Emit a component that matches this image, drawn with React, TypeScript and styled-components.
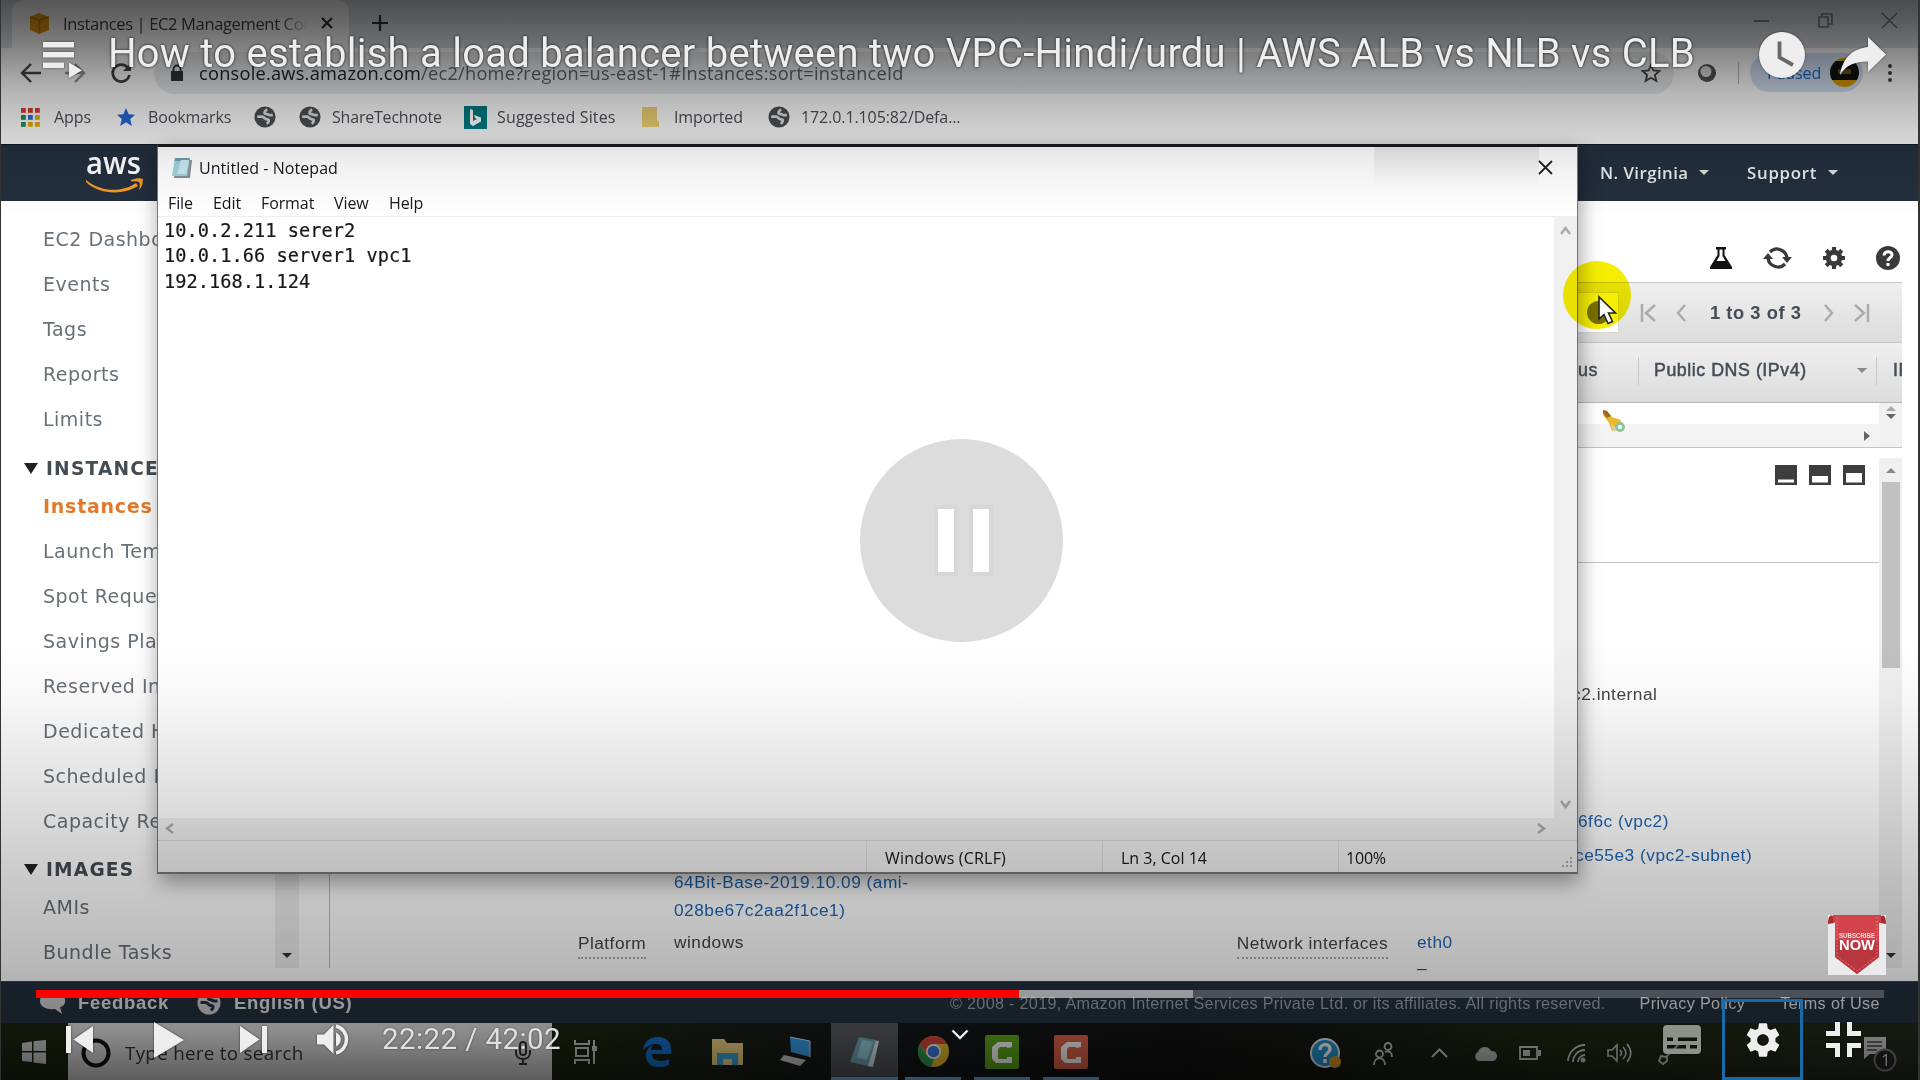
import React from "react";
import styled, { createGlobalStyle } from "styled-components";

const GlobalStyle = createGlobalStyle`
  * { box-sizing: border-box; }
  body { margin: 0; background: #000; }
`;

const uiFont = `"Open Sans", "Noto Sans", sans-serif`;
const arial = `"Liberation Sans", Arial, sans-serif`;
const verdana = `"DejaVu Sans", Verdana, sans-serif`;

/* ---------- shared ---------- */
const Screen = styled.div`
  position: relative;
  width: 1920px;
  height: 1080px;
  overflow: hidden;
  white-space: nowrap;
`;
const Desktop = styled.div`
  display: flex;
  flex-direction: column;
  width: 1920px;
  height: 1080px;
  background: #fff;
`;
const Icon = styled.svg<{ $w: number; $h?: number; $ml?: number }>`
  display: block;
  flex: none;
  width: ${(p) => p.$w}px;
  height: ${(p) => p.$h ?? p.$w}px;
  margin-left: ${(p) => p.$ml ?? 0}px;
  overflow: visible;
`;

/* ---------- browser ---------- */
const Browser = styled.header`
  flex: 0 0 144px;
  display: flex;
  flex-direction: column;
  font-family: ${uiFont};
  background: #fff;
`;
const TabStrip = styled.div`
  display: flex;
  flex: 0 0 48px;
  background: #dee1e6;
  padding-left: 12px;
`;
const Tab = styled.div`
  display: flex;
  align-items: center;
  width: 337px;
  height: 48px;
  padding: 0 16px 2px 17px;
  background: #fff;
  border-radius: 12px 12px 0 0;
`;
const TabTitle = styled.span`
  width: 246px;
  margin-left: 13px;
  overflow: hidden;
  font-size: 16.5px;
  letter-spacing: -0.35px;
  color: #3c4043;
  mask-image: linear-gradient(90deg, #000 88%, transparent);
`;
const WindowButtons = styled.div`
  display: flex;
  align-items: center;
  gap: 49px;
  height: 40px;
  margin-left: auto;
  padding-right: 23px;
`;
const AddressRow = styled.div`
  display: flex;
  align-items: center;
  flex: 0 0 48px;
  padding: 1px 0 0 21px;
`;
const Omnibox = styled.div`
  display: flex;
  align-items: center;
  width: 1520px;
  height: 42px;
  margin-left: 23px;
  padding: 0 13px 0 17px;
  border-radius: 21px;
  background: #e9ebee;
`;
const Url = styled.span`
  flex: 1;
  margin-left: 16px;
  font-size: 18.2px;
  letter-spacing: 0.25px;
  color: #5f6368;
  b { font-weight: 400; color: #202124; }
`;
const VLine = styled.i<{ $h: number; $ml: number; $c?: string }>`
  flex: none;
  width: 1px;
  height: ${(p) => p.$h}px;
  margin-left: ${(p) => p.$ml}px;
  background: ${(p) => p.$c ?? "#bbb"};
`;
const Profile = styled.div`
  display: flex;
  align-items: center;
  justify-content: space-between;
  width: 113px;
  height: 39px;
  margin-left: 11px;
  padding: 0 4px 0 17px;
  border-radius: 20px;
  background: #d3e0f5;
  color: #1967d2;
  font-size: 16px;
  letter-spacing: -0.1px;
`;
const Avatar = styled.span`
  display: grid;
  place-items: center;
  width: 29px;
  height: 29px;
  border-radius: 50%;
  background: linear-gradient(#d9a000 12%, #111 12% 76%, #d9a000 76%);
`;
const AvatarMark = styled.i`
  width: 13px;
  height: 5px;
  margin-bottom: 3px;
  border-radius: 1px;
  background: #6b5220;
`;
const Bookmarks = styled.div`
  display: flex;
  align-items: center;
  flex: 1;
  padding: 0 0 6px 21px;
  background: linear-gradient(#fdfdfd, #efeff1);
`;
const Bookmark = styled.span<{ $w: number; $gap: number; $ls?: number }>`
  display: flex;
  align-items: center;
  flex: 0 0 ${(p) => p.$w}px;
  gap: ${(p) => p.$gap}px;
  font-size: 16px;
  letter-spacing: ${(p) => p.$ls ?? -0.1}px;
  color: #4a4d52;
`;

/* ---------- aws console ---------- */
const AwsNav = styled.nav`
  display: flex;
  align-items: center;
  flex: 0 0 57px;
  padding-left: 86px;
  background: #232f3e;
  border-top: 1px solid #111823;
  color: #e8e8e8;
  font: 600 16.8px ${uiFont};
`;
const NavItem = styled.span<{ $w: number; $ls: number }>`
  display: flex;
  align-items: center;
  gap: 11px;
  width: ${(p) => p.$w}px;
  padding-bottom: 1px;
  letter-spacing: ${(p) => p.$ls}px;
`;
const NavRight = styled.div`
  display: flex;
  margin-left: auto;
`;
const Caret = styled.i<{ $c?: string; $s?: number }>`
  border: ${(p) => p.$s ?? 5}px solid transparent;
  border-top-color: ${(p) => p.$c ?? "#ddd"};
  border-bottom: 0;
`;
const Console = styled.main`
  display: flex;
  flex: 0 0 780px;
  background: #fff;
`;
const Sidebar = styled.aside`
  flex: 0 0 275px;
  overflow: hidden;
  padding: 16px 0 0 30px;
  font-family: ${verdana};
`;
const SideItem = styled.div<{ $active?: boolean }>`
  height: 45px;
  padding-left: 13px;
  line-height: 45px;
  font-size: ${(p) => (p.$active ? 19 : 19)}px;
  font-weight: ${(p) => (p.$active ? 700 : 400)};
  letter-spacing: ${(p) => (p.$active ? 0.75 : 0.5)}px;
  color: ${(p) => (p.$active ? "#e07b2e" : "#687078")};
`;
const SideHeading = styled.div`
  display: flex;
  align-items: center;
  gap: 8px;
  height: 38px;
  margin: 7px 0 -3.5px -6px;
  font-size: 18.6px;
  font-weight: 700;
  letter-spacing: 1.2px;
  color: #444c55;
`;
const SideScroll = styled.div`
  display: flex;
  align-items: flex-end;
  justify-content: center;
  width: 24px;
  height: 767px;
  padding-bottom: 10px;
  background: #eee;
`;
const Main = styled.section`
  display: flex;
  flex-direction: column;
  flex: 1;
  height: 767px;
  margin-left: 30px;
  border-left: 1px solid #bbb;
  padding-right: 18px;
  font-family: ${arial};
`;
const IconRow = styled.div`
  display: flex;
  flex: none;
  align-items: center;
  justify-content: flex-end;
  gap: 31px;
  height: 81px;
  padding: 33px 2px 0 0;
`;
const GreyRow = styled.div`
  display: flex;
  flex: none;
  align-items: center;
  justify-content: flex-end;
  height: 60px;
  border-top: 1px solid #c6c6c6;
  background: linear-gradient(#efefef, #dcdcdc);
  color: #444c58;
  font-size: 18px;
  font-weight: 700;
`;
const InfoBox = styled.div`
  display: grid;
  place-items: center;
  width: 42px;
  height: 41px;
  margin-right: 22px;
  background: #fff;
  border: 1px solid #d8d8d8;
`;
const Pager = styled.div`
  display: flex;
  align-items: center;
  width: 228px;
  margin-right: 33px;
  font-size: 18.3px;
  letter-spacing: 0.55px;
`;
const PageCount = styled.span`
  width: 115px;
  margin-left: 24px;
`;
const HeadCell = styled.div<{ $w: number; $pl: number }>`
  display: flex;
  align-items: center;
  justify-content: space-between;
  width: ${(p) => p.$w}px;
  height: 28px;
  margin-bottom: 4px;
  padding: 0 9px 0 ${(p) => p.$pl}px;
  border-left: 1px solid #c8c8c8;
  overflow: hidden;
  font-size: 17.8px;
  font-weight: 400;
  letter-spacing: 0.55px;
  -webkit-text-stroke: 0.5px #444c58;
`;
const ListRow = styled.div`
  display: flex;
  flex: none;
  justify-content: flex-end;
  height: 46px;
  border-top: 1px solid #b5b5b5;
  border-bottom: 1px solid #c4c4c4;
  background: linear-gradient(#fff 47%, #f3f3f3 47%);
`;
const RowBell = styled(Icon)`
  margin: 7px 238px 0 0;
`;
const RowArrow = styled(Icon)`
  margin: 28px 9px 0 0;
`;
const Stepper = styled.div`
  display: flex;
  flex-direction: column;
  align-items: center;
  gap: 3px;
  width: 23px;
  padding-top: 3px;
  background: #f1f1f1;
`;
const Detail = styled.div`
  display: flex;
  flex: 1;
  min-height: 0;
`;
const DetailBody = styled.div`
  flex: 1;
  display: flex;
  flex-direction: column;
  min-height: 0;
`;
const PaneButtons = styled.div`
  display: flex;
  flex: none;
  justify-content: flex-end;
  gap: 12px;
  height: 115px;
  padding: 17px 14px 0 0;
  border-bottom: 1px solid #c4c4c4;
`;
const Fields = styled.div`
  display: grid;
  grid-template-columns: 248px 68px 28px 380px 183px 151px 29px 1fr;
  grid-template-rows: 405px;
  flex: 1;
  min-height: 0;
  align-items: end;
  font-size: 17.3px;
  color: #444;
`;
const Label = styled.span`
  align-self: end;
  justify-self: end;
  margin-bottom: 9px;
  height: 26px;
  line-height: 20px;
  letter-spacing: 0.45px;
  border-bottom: 2px dotted #a9a9a9;
`;
const Values = styled.div`
  display: flex;
  flex-direction: column;
  align-self: start;
`;
const Value = styled.span<{ $top: number; $left?: number; $link?: boolean }>`
  height: 20px;
  line-height: 20px;
  margin-top: ${(p) => p.$top}px;
  padding-left: ${(p) => p.$left ?? 0}px;
  letter-spacing: 0.5px;
  color: ${(p) => (p.$link ? "#1f66b5" : "#444")};
`;
const DetailScroll = styled.div`
  display: flex;
  flex-direction: column;
  align-items: center;
  width: 23px;
  margin-top: 10px;
  padding: 10px 0;
  background: #f0f0f0;
`;
const Thumb = styled.div`
  width: 18px;
  height: 186px;
  margin: 9px 0 auto;
  background: #c1c1c1;
`;
const UpCaret = styled.i<{ $c?: string }>`
  border: 5px solid transparent;
  border-bottom-color: ${(p) => p.$c ?? "#888"};
  border-top: 0;
`;
const Footer = styled.footer`
  display: flex;
  align-items: center;
  flex: 0 0 42px;
  padding: 1px 0 0 40px;
  background: #232f3e;
  border-top: 1px solid #3b4552;
  color: #ddd;
  font-family: ${arial};
  font-size: 16.5px;
`;
const FootText = styled.span<{ $w: number; $ml: number; $size?: number; $bold?: boolean; $dim?: boolean; $ls?: number }>`
  flex: 0 0 ${(p) => p.$w}px;
  margin-left: ${(p) => p.$ml}px;
  font-size: ${(p) => p.$size ?? 16.2}px;
  letter-spacing: ${(p) => p.$ls ?? 0.3}px;
  font-weight: ${(p) => (p.$bold ? 700 : 400)};
  color: ${(p) => (p.$dim ? "#9a9fa6" : "#e2e2e2")};
`;

/* ---------- taskbar ---------- */
const Taskbar = styled.div`
  display: flex;
  flex: 0 0 57px;
  background: linear-gradient(90deg, #1a2410 0, #1a2410 30%, #15171a 45%, #111 62%, #1c2411 80%, #222a1c);
`;
const StartButton = styled.div`
  display: grid;
  place-items: center;
  width: 68px;
`;
const SearchBox = styled.div`
  display: flex;
  align-items: center;
  width: 484px;
  padding: 3px 21px 0 13px;
  background: #dcdcdc;
  font: 18.8px ${uiFont};
  color: #333;
`;
const SearchHint = styled.span`
  flex: 1;
  margin-left: 14px;
  letter-spacing: 0.3px;
`;
const Task = styled.div<{ $w: number; $open?: boolean; $active?: boolean }>`
  display: grid;
  place-items: center;
  width: ${(p) => p.$w}px;
  padding-top: 3px;
  border-bottom: 3px solid ${(p) => (p.$open ? "#76b9ed" : "transparent")};
  background: ${(p) => (p.$active ? "#55585c" : "transparent")};
  background-clip: padding-box;
`;
const TaskGap = styled.i<{ $w: number }>`
  flex: 0 0 ${(p) => p.$w}px;
`;
const Tray = styled.div`
  display: flex;
  align-items: center;
  flex: 1;
  padding-top: 3px;
`;

/* ---------- notepad ---------- */
const Notepad = styled.section`
  position: absolute;
  left: 157px;
  top: 144px;
  width: 1421px;
  height: 730px;
  display: flex;
  flex-direction: column;
  background: #fff;
  border: 1px solid #777;
  border-top: 3px solid #1a1a1e;
  border-bottom-width: 2px;
  box-shadow: 2px 8px 20px rgba(0, 0, 0, 0.38);
  font-family: ${uiFont};
  color: #16161c;
`;
const NoteTitle = styled.div`
  display: flex;
  align-items: center;
  height: 42px;
  padding-left: 13px;
  font-size: 16px;
`;
const NoteName = styled.span`
  margin-left: 6px;
  letter-spacing: 0.05px;
`;
const Smudge = styled.div`
  width: 165px;
  height: 42px;
  margin-left: auto;
  background: linear-gradient(rgba(80, 80, 90, 0.11), rgba(80, 80, 90, 0));
`;
const CloseIcon = styled(Icon)`
  margin: 0 25px 2px 0;
`;
const MenuBar = styled.div`
  display: flex;
  align-items: center;
  height: 28px;
  padding: 0 0 0 10px;
  font-size: 16px;
  letter-spacing: -0.1px;
  border-bottom: 1px solid #eee;
`;
const MenuItem = styled.span<{ $w: number }>`
  width: ${(p) => p.$w}px;
`;
const NoteBody = styled.div`
  display: flex;
  flex: 1;
`;
const NoteText = styled.pre`
  flex: 1;
  margin: 0;
  padding: 1px 0 0 6px;
  font: 18.6px/25.3px "DejaVu Sans Mono", monospace;
  letter-spacing: 0.05px;
  -webkit-text-stroke: 0.2px #16161c;
`;
const VScroll = styled.div`
  display: flex;
  flex-direction: column;
  justify-content: space-between;
  align-items: center;
  width: 23px;
  padding: 9px 0;
  background: #f0f0f0;
`;
const HScroll = styled.div`
  display: flex;
  align-items: center;
  justify-content: space-between;
  height: 22px;
  padding: 0 31px 1px 7px;
  background: #f0f0f0;
`;
const Status = styled.div`
  display: flex;
  height: 32px;
  padding-left: 708px;
  background: #f0f0f0;
  border-top: 1px solid #d7d7d7;
  font-size: 16px;
`;
const StatusCell = styled.span<{ $w: number; $pl: number; $ls?: number }>`
  width: ${(p) => p.$w}px;
  padding-left: ${(p) => p.$pl}px;
  line-height: 35px;
  letter-spacing: ${(p) => p.$ls ?? 0}px;
  border-left: 1px solid #dcdcdc;
`;
const Grip = styled.svg`
  align-self: flex-end;
  width: 12px;
  height: 12px;
  margin: 0 4px 3px auto;
`;

/* ---------- overlays ---------- */
const Pointer = styled.svg`
  position: absolute;
  left: 1563px;
  top: 261px;
  width: 70px;
  height: 70px;
`;
const YellowDisc = styled.div`
  position: absolute;
  left: 1563px;
  top: 261px;
  width: 68px;
  height: 68px;
  border-radius: 50%;
  background: #f6ee00;
  mix-blend-mode: multiply;
`;
const ShadeTop = styled.div`
  position: absolute;
  inset: 0 0 auto 0;
  height: 215px;
  background: linear-gradient(
    rgba(0, 0, 0, 0.66) 0, rgba(0, 0, 0, 0.6) 20px, rgba(0, 0, 0, 0.5) 45px,
    rgba(0, 0, 0, 0.36) 75px, rgba(0, 0, 0, 0.24) 105px, rgba(0, 0, 0, 0.13) 135px,
    rgba(0, 0, 0, 0.05) 170px, rgba(0, 0, 0, 0) 215px);
`;
const ShadeBottom = styled.div`
  position: absolute;
  inset: 640px 0 0 0;
  background: linear-gradient(
    rgba(0, 0, 0, 0) 0, rgba(0, 0, 0, 0.03) 60px, rgba(0, 0, 0, 0.09) 120px,
    rgba(0, 0, 0, 0.15) 180px, rgba(0, 0, 0, 0.21) 240px, rgba(0, 0, 0, 0.28) 325px,
    rgba(0, 0, 0, 0.36) 390px, rgba(0, 0, 0, 0.58) 440px);
`;
const EdgeFrame = styled.div`
  position: absolute;
  inset: 0;
  border-left: 1px solid #333;
  border-right: 2px solid #333;
`;
const TopChrome = styled.div`
  position: absolute;
  inset: 0 0 auto 0;
  display: flex;
  align-items: center;
  height: 106px;
  padding: 0 34px 0 43px;
  filter: drop-shadow(0 0 1px rgba(0, 0, 0, 0.5));
`;
const ListIcon = styled(Icon)`
  margin-top: 14px;
`;
const ClockIcon = styled(Icon)`
  margin-top: 3px;
`;
const ShareIcon = styled(Icon)`
  margin-top: 5px;
`;
const VideoTitle = styled.h1`
  flex: 1;
  margin: 0 0 0 26px;
  font: 400 40px Roboto, sans-serif;
  letter-spacing: 0.24px;
  color: #eee;
  text-shadow: 0 0 3px rgba(0, 0, 0, 0.4);
`;
const PauseBezel = styled.div`
  position: absolute;
  left: 860px;
  top: 439px;
  width: 203px;
  height: 203px;
  display: flex;
  align-items: center;
  justify-content: center;
  gap: 19px;
  padding-left: 4px;
  border-radius: 50%;
  background: #dcdcdc;
`;
const PauseBar = styled.i`
  width: 16px;
  height: 63px;
  background: #fff;
  box-shadow: 0 0 0 4px #d7d7d7;
`;
const Controls = styled.div`
  position: absolute;
  inset: 990px 0 0 0;
  display: flex;
  flex-direction: column;
`;
const Progress = styled.div`
  display: flex;
  flex: 0 0 8px;
  margin: 0 36px 1px;
  background: rgba(255, 255, 255, 0.22);
`;
const Segment = styled.i<{ $w: number; $c: string }>`
  width: ${(p) => p.$w}px;
  background: ${(p) => p.$c};
`;
const ControlRow = styled.div`
  display: flex;
  align-items: center;
  height: 81px;
  padding: 0 36px 0 39px;
`;
const Control = styled.button<{ $w: number; $focus?: boolean }>`
  display: grid;
  place-items: center;
  width: ${(p) => p.$w}px;
  height: 81px;
  padding: 0;
  border: 3px solid ${(p) => (p.$focus ? "#1a69a8" : "transparent")};
  background: none;
  svg { filter: drop-shadow(0 0 1px rgba(0, 0, 0, 0.6)); }
`;
const Time = styled.span`
  flex: 1;
  margin: -2px 0 0 5px;
  font: 400 29.5px Roboto, sans-serif;
  letter-spacing: 0.4px;
  color: #e0e0e0;
  text-shadow: 0 0 2px rgba(0, 0, 0, 0.6);
`;
const MoreHint = styled.svg`
  position: absolute;
  left: 951px;
  top: 1029px;
  width: 18px;
  height: 11px;
`;
const Subscribe = styled.div`
  position: absolute;
  left: 1828px;
  top: 915px;
  width: 58px;
  height: 60px;
  background: #ebebeb;
  svg { display: block; }
`;

/* ---------- icons ---------- */
const Globe = ({ c = "#4a4d50", land = "#dcdcdc", s = 22 }: { c?: string; land?: string; s?: number }) => (
  <Icon $w={s} viewBox="0 0 24 24">
    <circle cx="12" cy="12" r="11.500" fill={c} />
    <path d="M3.500 11.500H9c2 0 2 3 5 3s2.500 2.500 0 5M20.500 10h-3c-2 0-2-1.500-5-1.500-2 0-1-3.500 2-4.500" fill="none" stroke={land} strokeWidth="3" />
  </Icon>
);
const Chevron = ({ d, w = 12, h = 14, c = "#999", ml = 0 }: { d: string; w?: number; h?: number; c?: string; ml?: number }) => (
  <Icon $w={w} $h={h} $ml={ml} viewBox={`0 0 ${w} ${h}`}>
    <path d={d} fill="none" stroke={c} strokeWidth="2.400" />
  </Icon>
);
const NoteIcon = ({ s = 22 }: { s?: number }) => (
  <Icon $w={s} viewBox="0 0 22 22">
    <path d="M5 3h16l-2 18H3z" fill="#8a9298" />
    <path d="M4 1h15l-3 18H1z" fill="#9fd0e0" />
    <path d="M4 1h15l-.5 3H3.500z" fill="#6d9dad" />
    <path d="M10 3h8l-3 14H6z" fill="#c8e8f0" />
  </Icon>
);
const AppsIcon = () => (
  <Icon $w={19} viewBox="0 0 19 19">
    {["#d93b30", "#c83b30", "#d93b30", "#1b8f5a", "#2a6fd6", "#e5a800", "#1b8f5a", "#e5a800", "#e5a800"].map((c, i) => (
      <rect key={i} x={(i % 3) * 7} y={Math.floor(i / 3) * 7} width="4.800" height="4.800" fill={c} />
    ))}
  </Icon>
);
const Camtasia = ({ c }: { c: string }) => (
  <Icon $w={34} viewBox="0 0 34 34">
    <rect width="34" height="34" rx="2" fill={c} />
    <path d="M27 12V7H13L7 12v12l4 4h16v-6h-5v2h-8l-1-1v-9l2-2h7v1z" fill="#fff" />
  </Icon>
);
const Pane = ({ y }: { y: number }) => (
  <Icon $w={22} $h={20} viewBox="0 0 22 20">
    <rect width="22" height="20" fill="#3d3d3d" />
    <rect x="3" y={y} width="16" height={17.5 - y} fill="#fff" />
  </Icon>
);

const sideTop = ["EC2 Dashboard", "Events", "Tags", "Reports", "Limits"];
const sideMid = ["Launch Templates", "Spot Requests", "Savings Plans", "Reserved Instances", "Dedicated Hosts", "Scheduled Instances", "Capacity Reservations"];

const DownTriangle = () => (
  <Icon $w={14} $h={11} viewBox="0 0 14 11"><path d="M0 0h14L7 11z" fill="#222" /></Icon>
);

function BrowserChrome() {
  return (
    <Browser>
      <TabStrip>
        <Tab>
          <Icon $w={21} viewBox="0 0 21 21">
            <path d="M1 4l9-4 10 4v13l-10 4-9-4z" fill="#e59a12" />
            <path d="M10.500 7v14M1 4l9.500 3L20 4" stroke="#b87808" strokeWidth="1.500" fill="none" />
          </Icon>
          <TabTitle>Instances | EC2 Management Con</TabTitle>
          <Icon $w={12} $ml={12} viewBox="0 0 12 12"><path d="M1 1l10 10M11 1L1 11" stroke="#333" strokeWidth="2.200" /></Icon>
        </Tab>
        <Icon $w={16} $h={46} $ml={23} viewBox="0 -15 16 46"><path d="M8 0v16M0 8h16" stroke="#333" strokeWidth="2.200" /></Icon>
        <WindowButtons>
          <Icon $w={15} viewBox="0 0 15 15"><path d="M0 8h15" stroke="#7b7d80" strokeWidth="1.800" /></Icon>
          <Icon $w={15} viewBox="0 0 15 15"><path d="M1 4h9v10H1zM4 4V1h10v10h-4" fill="none" stroke="#7b7d80" strokeWidth="1.600" /></Icon>
          <Icon $w={15} viewBox="0 0 15 15"><path d="M0 0l15 15M15 0L0 15" stroke="#7b7d80" strokeWidth="1.600" /></Icon>
        </WindowButtons>
      </TabStrip>
      <AddressRow>
        <Icon $w={20} viewBox="0 0 20 20"><path d="M20 10H2M10 1l-9 9 9 9" fill="none" stroke="#444" strokeWidth="2.400" /></Icon>
        <Icon $w={20} $ml={24} viewBox="0 0 20 20"><path d="M0 10h18M10 1l9 9-9 9" fill="none" stroke="#999" strokeWidth="2.400" /></Icon>
        <Icon $w={20} $ml={26} viewBox="0 0 20 20"><path d="M17 5a8.500 8.500 0 1 0 1.500 7" fill="none" stroke="#444" strokeWidth="2.600" /><path d="M20 0v8h-8z" fill="#444" /></Icon>
        <Omnibox>
          <Icon $w={12} $h={16} viewBox="0 0 12 16"><path d="M0 6h12v10H0z" fill="#333" /><path d="M2.500 7V4a3.500 3.500 0 0 1 7 0v3" fill="none" stroke="#333" strokeWidth="1.800" /></Icon>
          <Url><b>console.aws.amazon.com</b>/ec2/home?region=us-east-1#Instances:sort=instanceId</Url>
          <Icon $w={20} viewBox="0 0 20 20"><path d="M10 2l2.400 5.500 6 .5-4.500 4 1.400 6-5.300-3.200L4.700 18l1.400-6L1.600 8l6-.5z" fill="none" stroke="#444" strokeWidth="1.800" /></Icon>
        </Omnibox>
        <Icon $w={18} $ml={24} viewBox="0 0 18 18"><circle cx="9" cy="9" r="9" fill="#555" /><circle cx="8" cy="7.500" r="5.500" fill="#ddd" /></Icon>
        <VLine $h={22} $ml={22} />
        <Profile>
          Paused
          <Avatar><AvatarMark /></Avatar>
        </Profile>
        <Icon $w={4} $h={18} $ml={25} viewBox="0 0 4 18">
          <circle cx="2" cy="2" r="2" fill="#444" /><circle cx="2" cy="9" r="2" fill="#444" /><circle cx="2" cy="16" r="2" fill="#444" />
        </Icon>
      </AddressRow>
      <Bookmarks>
        <Bookmark $w={96} $gap={14}><AppsIcon />Apps</Bookmark>
        <Bookmark $w={137} $gap={13}>
          <Icon $w={18} viewBox="0 0 20 20"><path d="M10 0l3 7 7 .5-5.300 4.800L16.500 20 10 15.800 3.500 20l1.800-7.700L0 7.500 7 7z" fill="#2364d2" /></Icon>
          Bookmarks
        </Bookmark>
        <Bookmark $w={45} $gap={0}><Globe /></Bookmark>
        <Bookmark $w={165} $gap={11} $ls={-0.2}><Globe />ShareTechnote</Bookmark>
        <Bookmark $w={178} $gap={10} $ls={0.15}>
          <Icon $w={23} viewBox="0 0 23 23"><path d="M0 0h23v23H0z" fill="#00797f" /><path d="M6 3l3 1v11l4-2-2-1-1-3 7 2.500v4L9 20l-3-2z" fill="#fff" /></Icon>
          Suggested Sites
        </Bookmark>
        <Bookmark $w={126} $gap={15}>
          <Icon $w={17} $h={20} viewBox="0 0 17 20"><path d="M0 0h15v14h2v6H0z" fill="#e8cd72" /></Icon>
          Imported
        </Bookmark>
        <Bookmark $w={200} $gap={11} $ls={-0.1}><Globe />172.0.1.105:82/Defa...</Bookmark>
      </Bookmarks>
    </Browser>
  );
}

function AwsConsole() {
  return (
    <>
      <AwsNav>
        <Icon $w={58} $h={38} viewBox="0 0 58 38">
          <text x="0" y="19.500" textLength="55" lengthAdjust="spacingAndGlyphs" fontFamily="Open Sans, sans-serif" fontWeight="600" fontSize="30" fill="#fff">aws</text>
          <path d="M0 26c14 12 36 13 50 3l2 3C36 42 12 40 0 28z" fill="#f59a23" />
          <path d="M45 26c5-2 9-2 12-1 0 4-1 8-4 11 1-4 1-6 0-8-2-1-4-1-8-.500z" fill="#f59a23" />
        </Icon>
        <NavRight>
          <NavItem $w={147} $ls={0.45}>N. Virginia <Caret /></NavItem>
          <NavItem $w={173} $ls={0.75}>Support <Caret /></NavItem>
        </NavRight>
      </AwsNav>
      <Console>
        <Sidebar>
          {sideTop.map((t) => <SideItem key={t}>{t}</SideItem>)}
          <SideHeading><DownTriangle />INSTANCES</SideHeading>
          <SideItem $active>Instances</SideItem>
          {sideMid.map((t) => <SideItem key={t}>{t}</SideItem>)}
          <SideHeading><DownTriangle />IMAGES</SideHeading>
          <SideItem>AMIs</SideItem>
          <SideItem>Bundle Tasks</SideItem>
        </Sidebar>
        <SideScroll><Caret $c="#333" /></SideScroll>
        <Main>
          <IconRow>
            <Icon $w={22} viewBox="0 0 22 22"><path d="M6 0h10v2.500h-1.500V8L22 20v2H0v-2L7.500 8V2.500H6z" fill="#111" /><path d="M9.500 2.500h3V9l3 5h-9l3-5z" fill="#fff" /></Icon>
            <Icon $w={29} $h={22} viewBox="0 0 29 22">
              <path d="M7 5a10 10 0 0 1 17 6M22 17A10 10 0 0 1 5 11" fill="none" stroke="#3a3a3a" strokeWidth="3.200" />
              <path d="M19 10h10l-5 6zM0 12h10L5 6z" fill="#3a3a3a" />
            </Icon>
            <Icon $w={22} viewBox="0 0 22 22">
              <circle cx="11" cy="11" r="5.800" fill="none" stroke="#3a3a3a" strokeWidth="5" />
              <path d="M11 0v5M11 17v5M0 11h5M17 11h5M3.200 3.200l3.500 3.500M15.300 15.300l3.500 3.500M3.200 18.800l3.500-3.500M15.300 6.700l3.500-3.500" stroke="#3a3a3a" strokeWidth="4.200" />
            </Icon>
            <Icon $w={24} viewBox="0 0 24 24">
              <circle cx="12" cy="12" r="12" fill="#3a3a3a" />
              <path d="M8 9.500c0-5 8-5 8-.5 0 3-4 2.700-4 6M12 17v3" fill="none" stroke="#fff" strokeWidth="3" />
            </Icon>
          </IconRow>
          <GreyRow>
            <InfoBox><Icon $w={23} viewBox="0 0 23 23"><circle cx="11.500" cy="11.500" r="11.500" fill="#7d7760" /></Icon></InfoBox>
            <Pager>
              <Chevron w={15} h={18} d="M1 0v18M14 1L5 9l9 8" c="#aaa" />
              <Chevron w={10} h={18} ml={20} d="M9 1L2 9l7 8" c="#aaa" />
              <PageCount>1 to 3 of 3</PageCount>
              <Chevron w={10} h={18} d="M1 1l7 8-7 8" c="#aaa" />
              <Chevron w={15} h={18} ml={20} d="M14 0v18M1 1l9 8-9 8" c="#aaa" />
            </Pager>
          </GreyRow>
          <GreyRow>
            <HeadCell $w={100} $pl={39}>us</HeadCell>
            <HeadCell $w={238} $pl={15}>Public DNS (IPv4) <Caret $c="#888" /></HeadCell>
            <HeadCell $w={25} $pl={16}>IP</HeadCell>
          </GreyRow>
          <ListRow>
            <RowBell $w={24} viewBox="0 0 24 24">
              <path d="M1 0l4 1 5 6 9 3-1 6-8 5-3-8-6-8z" fill="#edb72a" />
              <path d="M1 0l4 1 4 5-4 2-4-5z" fill="#9c6b22" />
              <path d="M9 14l7 4-4 4z" fill="#d9d0b0" />
              <circle cx="18" cy="17" r="5" fill="#8fc39a" /><circle cx="18" cy="17" r="2.200" fill="#eef7ee" />
            </RowBell>
            <RowArrow $w={6} $h={10} viewBox="0 0 6 10"><path d="M0 0l6 5-6 5z" fill="#666" /></RowArrow>
            <Stepper><UpCaret $c="#aaa" /><Caret $c="#666" /></Stepper>
          </ListRow>
          <Detail>
            <DetailBody>
              <PaneButtons><Pane y={14.5} /><Pane y={11} /><Pane y={8} /></PaneButtons>
              <Fields>
                <i />
                <Label>Platform</Label>
                <i />
                <Values>
                  <Value $top={309} $link>64Bit-Base-2019.10.09 (ami-</Value>
                  <Value $top={8} $link>028be67c2aa2f1ce1)</Value>
                  <Value $top={12}>windows</Value>
                </Values>
                <i />
                <Label>Network interfaces</Label>
                <i />
                <Values>
                  <Value $top={121} $left={145}>ec2.internal</Value>
                  <Value $top={107} $left={161} $link>6f6c (vpc2)</Value>
                  <Value $top={14} $left={158} $link>ce55e3 (vpc2-subnet)</Value>
                  <Value $top={67} $link>eth0</Value>
                  <Value $top={6}>–</Value>
                </Values>
              </Fields>
            </DetailBody>
            <DetailScroll><UpCaret /><Thumb /><Caret $c="#333" /></DetailScroll>
          </Detail>
        </Main>
      </Console>
      <Footer>
        <Icon $w={24} $h={22} viewBox="0 0 24 22"><path d="M12 0c16 0 16 14 8 15l2 7-7-5C-5 19-4 0 12 0z" fill="#ccc" /></Icon>
        <FootText $w={119} $ml={14} $bold $size={18.5} $ls={0.7}>Feedback</FootText>
        <Globe c="#ccc" land="#232f3e" s={24} />
        <FootText $w={716} $ml={13} $bold $size={18.5} $ls={0.7}>English (US)</FootText>
        <FootText $w={655} $ml={0} $dim>© 2008 - 2019, Amazon Internet Services Private Ltd. or its affiliates. All rights reserved.</FootText>
        <FootText $w={104} $ml={34} $ls={0.35}>Privacy Policy</FootText>
        <FootText $w={104} $ml={35} $ls={0.35}>Terms of Use</FootText>
      </Footer>
    </>
  );
}

function WindowsTaskbar() {
  const g = "#c8c8c8";
  return (
    <Taskbar>
      <StartButton>
        <Icon $w={24} viewBox="0 0 24 24"><path d="M0 3l10-1.500V11H0zM11.500 1.300L24 0v11H11.500zM0 12.500h10V22L0 21zM11.500 12.500H24V24l-12.500-1.500z" fill="#ccc" /></Icon>
      </StartButton>
      <SearchBox>
        <Icon $w={30} viewBox="0 0 30 30"><circle cx="15" cy="15" r="12.500" fill="none" stroke="#111" strokeWidth="4" /></Icon>
        <SearchHint>Type here to search</SearchHint>
        <Icon $w={16} $h={24} viewBox="0 0 16 24"><rect x="5" y="1" width="6" height="13" rx="3" fill="none" stroke="#333" strokeWidth="2" /><path d="M1 9v3c0 8 14 8 14 0V9M8 18v5M4 23h8" fill="none" stroke="#333" strokeWidth="2" /></Icon>
      </SearchBox>
      <Task $w={68}>
        <Icon $w={24} viewBox="0 0 24 24"><path d="M1 0v4h14V0M1 24v-4h14v4M2 8h12v8H2zM20 0v24" fill="none" stroke={g} strokeWidth="2" /><path d="M18 6h5v5h-5z" fill={g} /></Icon>
      </Task>
      <Task $w={74}>
        <Icon $w={30} viewBox="0 0 30 30"><path d="M1 14C2 4 8 0 16 0c9 0 13 6 13 12v5H10c0 5 4 7 9 7 4 0 6-1 8-2v6c-3 1-6 2-10 2C9 30 4 26 4 18c0-5 3-8 7-10-1 1-2 3-2 5h11c0-4-2-6-6-6-5 0-10 2-13 7z" fill="#1572d2" /></Icon>
      </Task>
      <Task $w={66}>
        <Icon $w={31} $h={26} viewBox="0 0 31 26"><path d="M0 0h12l3 4h16v22H0z" fill="#f0d483" /><path d="M5 14h21v12h-6v-6h-9v6H5z" fill="#3fa4d8" /></Icon>
      </Task>
      <Task $w={71}>
        <Icon $w={32} $h={29} viewBox="0 0 32 29"><path d="M10 0l20 4v16l-19-5z" fill="#35a0ee" /><path d="M10 0l20 4v16" fill="none" stroke="#cde" strokeWidth="1" /><path d="M4 18l22 5-6 6-20-6z" fill="#ccc" /></Icon>
      </Task>
      <Task $w={67} $open $active>
        <Icon $w={30} $h={30} viewBox="0 0 30 30"><path d="M10 1l19 3-6 26-6-1z" fill="#dfe8ec" /><path d="M9 0l17 3-8 26L0 25z" fill="#6fa9bb" /><path d="M12 3l11 2-6 18-10-3z" fill="#9ccfdd" /></Icon>
      </Task>
      <TaskGap $w={7} />
      <Task $w={56} $open>
        <Icon $w={31} viewBox="0 0 31 31">
          <circle cx="15.500" cy="15.500" r="15.500" fill="#e8bf2d" />
          <path d="M2 8a15.500 15.500 0 0 1 27 0H15.500l-6 11z" fill="#d8453a" />
          <path d="M2 8l7 12 7 3-3 8A15.500 15.500 0 0 1 2 8z" fill="#2f9e55" />
          <circle cx="15.500" cy="15.500" r="7.500" fill="#fff" /><circle cx="15.500" cy="15.500" r="5.800" fill="#3a7be0" />
        </Icon>
      </Task>
      <TaskGap $w={13} />
      <Task $w={56} $open><Camtasia c="#5fa81b" /></Task>
      <TaskGap $w={13} />
      <Task $w={56} $open><Camtasia c="#e0634a" /></Task>
      <Tray>
        <Icon $w={31} $ml={211} viewBox="0 0 31 31">
          <circle cx="15" cy="15" r="14" fill="#2492cf" stroke="#dfe9ee" strokeWidth="2" />
          <path d="M10 12c0-7 10-7 10-1 0 4-5 4-5 8M15 21v4" fill="none" stroke="#fff" strokeWidth="3.400" />
          <circle cx="25" cy="24" r="6" fill="#d99a2b" />
        </Icon>
        <Icon $w={20} $h={23} $ml={32} viewBox="0 0 20 23"><circle cx="15" cy="4.500" r="3.500" fill="none" stroke={g} strokeWidth="1.800" /><circle cx="6.500" cy="12" r="3.500" fill="none" stroke={g} strokeWidth="1.800" /><path d="M1 23c0-9 11-9 11 0M12 10c5-2 7 1 7 5" fill="none" stroke={g} strokeWidth="1.800" /></Icon>
        <Icon $w={17} $h={10} $ml={38} viewBox="0 0 17 10"><path d="M1 9l7.500-7.500L16 9" fill="none" stroke={g} strokeWidth="2" /></Icon>
        <Icon $w={24} $h={15} $ml={25} viewBox="0 0 24 15"><path d="M5 15a5 5 0 0 1 0-9 7 7 0 0 1 13-1 5 5 0 0 1 2 10z" fill="#bbb" /></Icon>
        <Icon $w={22} $h={14} $ml={22} viewBox="0 0 22 14"><path d="M1 1h17v12H1z" fill="none" stroke={g} strokeWidth="1.800" /><path d="M4 4h7v6H4zM19 4h3v6h-3z" fill={g} /></Icon>
        <Icon $w={19} $ml={26} viewBox="0 0 19 19"><path d="M1 17A17 17 0 0 1 18 1M6 18A12 12 0 0 1 18 6M11 18a7 7 0 0 1 7-7" fill="none" stroke={g} strokeWidth="1.800" /><circle cx="16" cy="16" r="2.500" fill={g} /></Icon>
        <Icon $w={25} $h={20} $ml={21} viewBox="0 0 25 20"><path d="M1 7h4l5-5v16l-5-5H1zM13 7c2 2 2 4 0 6M16 4c4 4 4 8 0 12M20 1c5 6 5 12 0 18" fill="none" stroke={g} strokeWidth="1.600" /></Icon>
        <Icon $w={24} $h={24} $ml={26} viewBox="0 0 24 24"><path d="M22 2L8 16l-5-1-2 5 4 3 4-3V15L22 2" fill="none" stroke={g} strokeWidth="1.800" /></Icon>
        <Icon $w={34} $h={36} $ml={181} viewBox="0 0 34 36">
          <path d="M1 2h22v17H7l-6 5z" fill="#ccc" /><path d="M4 7h15M4 11h15M4 15h10" stroke="#444" strokeWidth="1.600" />
          <circle cx="22" cy="25" r="10.500" fill="#222" stroke="#777" strokeWidth="2" />
          <text x="18" y="31" fontFamily="Open Sans, sans-serif" fontSize="17" fill="#ddd">1</text>
        </Icon>
      </Tray>
    </Taskbar>
  );
}

function NotepadWindow() {
  return (
    <Notepad>
      <NoteTitle>
        <NoteIcon />
        <NoteName>Untitled - Notepad</NoteName>
        <Smudge />
        <CloseIcon $w={13} viewBox="0 0 13 13"><path d="M0 0l13 13M13 0L0 13" stroke="#222" strokeWidth="1.800" /></CloseIcon>
      </NoteTitle>
      <MenuBar>
        <MenuItem $w={45}>File</MenuItem>
        <MenuItem $w={48}>Edit</MenuItem>
        <MenuItem $w={73}>Format</MenuItem>
        <MenuItem $w={55}>View</MenuItem>
        <MenuItem $w={45}>Help</MenuItem>
      </MenuBar>
      <NoteBody>
        <NoteText>{"10.0.2.211 serer2\n10.0.1.66 server1 vpc1\n192.168.1.124"}</NoteText>
        <VScroll>
          <Chevron w={11} h={9} d="M1 8l4.500-6L10 8" c="#aaa" />
          <Chevron w={11} h={9} d="M1 1l4.500 6L10 1" c="#aaa" />
        </VScroll>
      </NoteBody>
      <HScroll>
        <Chevron w={9} h={11} d="M8 1L2 5.500 8 10" c="#aaa" />
        <Chevron w={9} h={11} d="M1 1l6 4.500L1 10" c="#aaa" />
      </HScroll>
      <Status>
        <StatusCell $w={236} $pl={18} $ls={0.2}>Windows (CRLF)</StatusCell>
        <StatusCell $w={236} $pl={18}>Ln 3, Col 14</StatusCell>
        <StatusCell $w={200} $pl={7} $ls={-0.2}>100%</StatusCell>
        <Grip viewBox="0 0 12 12"><path d="M9 0h2v2H9zM9 4h2v2H9zM9 8h2v2H9zM5 4h2v2H5zM5 8h2v2H5zM1 8h2v2H1z" fill="#aaa" /></Grip>
      </Status>
    </Notepad>
  );
}

function Player() {
  const w = "#eee";
  return (
    <>
      <TopChrome>
        <ListIcon $w={39} $h={36} viewBox="0 0 39 36">
          <path d="M0 0h31v5.500H0zM0 10h31v5.500H0zM0 20.500h21V26H0zM26 20.500v15.500l13-7.800z" fill={w} />
        </ListIcon>
        <VideoTitle>How to establish a load balancer between two VPC-Hindi/urdu | AWS ALB vs NLB vs CLB</VideoTitle>
        <ClockIcon $w={46} viewBox="0 0 46 46">
          <circle cx="23" cy="23" r="23" fill={w} /><path d="M20.500 9.500v16L34 33" fill="none" stroke="#66686a" strokeWidth="3.800" />
        </ClockIcon>
        <ShareIcon $w={46} $h={38} $ml={35} viewBox="0 0 46 38">
          <path d="M28 0l18 17.500L28 35V24.500C15 24.500 6 28 0 38 2 24 10 12 28 10z" fill={w} />
        </ShareIcon>
      </TopChrome>
      <PauseBezel><PauseBar /><PauseBar /></PauseBezel>
      <Subscribe>
        <svg width="58" height="60" viewBox="0 0 58 60">
          <path d="M0 9c0-12 6-9 6-5v4zM58 9c0-12-6-9-6-5v4z" fill="#a92c33" />
          <path d="M5 0h48v8l-2 0v34L29 59 7 42V8L5 6z" fill="#d2434b" />
          <path d="M7 26h44v16L29 59 7 42z" fill="#ba363f" />
          <path d="M9 2v39l20 15 20-15V2" fill="none" stroke="#e9868b" strokeWidth=".8" strokeDasharray="2 1.500" />
          <text x="29" y="22.500" textAnchor="middle" textLength="36" lengthAdjust="spacingAndGlyphs" fontFamily="Liberation Sans, sans-serif" fontWeight="700" fontSize="7.500" fill="#f3dede">SUBSCRIBE</text>
          <text x="29" y="35" textAnchor="middle" textLength="36" lengthAdjust="spacingAndGlyphs" fontFamily="Liberation Sans, sans-serif" fontWeight="700" fontSize="14" fill="#fff">NOW</text>
        </svg>
      </Subscribe>
      <Controls>
        <Progress>
          <Segment $w={983} $c="#f00" />
          <Segment $w={174} $c="rgba(255,255,255,0.42)" />
        </Progress>
        <ControlRow>
          <Control $w={81}><Icon $w={27} viewBox="0 0 27 27"><path d="M0 0h5v27H0zM27 0v27L7.500 13.500z" fill={w} /></Icon></Control>
          <Control $w={98}><Icon $w={30} $h={36} viewBox="0 0 30 36"><path d="M0 0l30 18L0 36z" fill={w} /></Icon></Control>
          <Control $w={71}><Icon $w={27} viewBox="0 0 27 27"><path d="M0 0l19.500 13.500L0 27zM22 0h5v27h-5z" fill={w} /></Icon></Control>
          <Control $w={88}>
            <Icon $w={32} $h={31} viewBox="0 0 32 31">
              <path d="M0 10.500h7L16.500 1v29L7 20.500H0zM19 8.500c6.500 2.500 6.500 11.500 0 14z" fill={w} />
              <path d="M19 2c14 3.500 14 23.500 0 27" fill="none" stroke={w} strokeWidth="3.600" />
            </Icon>
          </Control>
          <Time>22:22 / 42:02</Time>
          <Control $w={81}>
            <Icon $w={38} $h={29} viewBox="0 0 38 29">
              <path fillRule="evenodd" d="M4 0h30a4 4 0 0 1 4 4v21a4 4 0 0 1-4 4H4a4 4 0 0 1-4-4V4a4 4 0 0 1 4-4zM4 12.500v3.500h6v-3.500zM15 12.500v3.500h19v-3.500zM4 20v3.500h19V20zM27 20v3.500h7V20z" fill="#8e908a" />
            </Icon>
          </Control>
          <Control $w={81} $focus>
            <Icon $w={40} viewBox="0 0 24 24">
              <path d="M19.430 12.980c.04-.32.07-.64.07-.98s-.03-.66-.07-.98l2.110-1.650c.19-.15.24-.42.12-.64l-2-3.460c-.12-.22-.39-.3-.61-.22l-2.490 1c-.52-.4-1.080-.73-1.690-.98l-.38-2.650C14.460 2.180 14.250 2 14 2h-4c-.25 0-.46.18-.49.42l-.38 2.650c-.61.25-1.170.59-1.690.98l-2.490-1c-.23-.09-.49 0-.61.22l-2 3.460c-.13.22-.07.49.12.64l2.110 1.650c-.04.32-.07.65-.07.98s.03.66.07.98l-2.110 1.650c-.19.15-.24.42-.12.64l2 3.460c.12.22.39.3.61.22l2.490-1c.52.4 1.080.73 1.690.98l.38 2.650c.03.24.24.42.49.42h4c.25 0 .46-.18.49-.42l.38-2.650c.61-.25 1.170-.59 1.690-.98l2.490 1c.23.09.49 0 .61-.22l2-3.460c.12-.22.07-.49-.12-.64l-2.110-1.650zM12 15.500c-1.930 0-3.500-1.570-3.500-3.500s1.570-3.500 3.500-3.500 3.500 1.570 3.500 3.500-1.570 3.500-3.500 3.500z" fill={w} />
            </Icon>
          </Control>
          <Control $w={81}>
            <Icon $w={35} viewBox="0 0 35 35"><path d="M9 0h5v14H0V9h9zM21 0h5v9h9v5H21zM0 21h14v14H9v-9H0zM21 21h14v5h-9v9h-5z" fill={w} /></Icon>
          </Control>
        </ControlRow>
      </Controls>
      <MoreHint viewBox="0 0 18 11"><path d="M1.500 1.500L9 9l7.500-7.500" fill="none" stroke="#eee" strokeWidth="2.400" /></MoreHint>
    </>
  );
}

export default function App() {
  return (
    <Screen>
      <GlobalStyle />
      <Desktop>
        <BrowserChrome />
        <AwsConsole />
        <WindowsTaskbar />
      </Desktop>
      <NotepadWindow />
      <YellowDisc />
      <Pointer viewBox="0 0 70 70">
        <path d="M36 36v22l5-4.500 4 9 4.500-2-4-8.500h7z" fill="#fff" stroke="#222" strokeWidth="1.600" />
      </Pointer>
      <ShadeTop />
      <ShadeBottom />
      <EdgeFrame />
      <Player />
    </Screen>
  );
}
